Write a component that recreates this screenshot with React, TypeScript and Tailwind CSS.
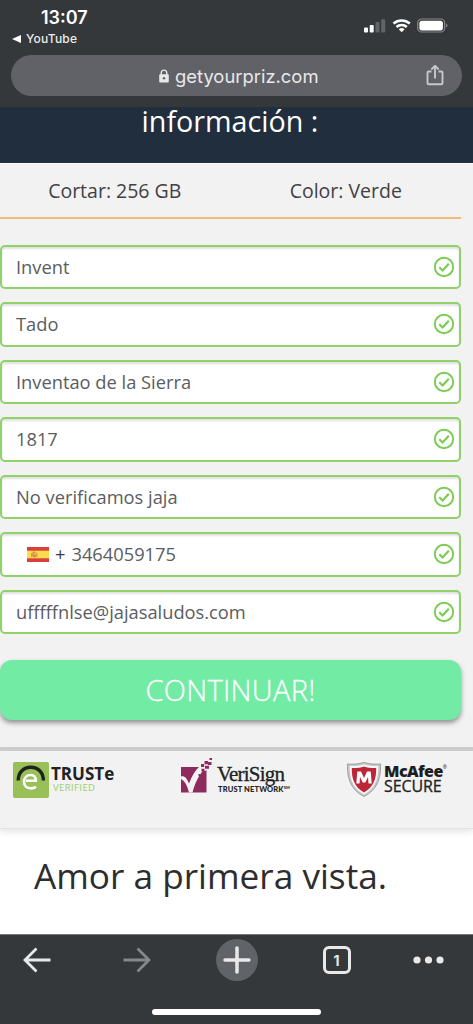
import type { ReactNode } from "react";

type Field = {
  id: string;
  value: string;
  phone?: boolean;
};

const fields: Field[] = [
  { id: "name", value: "Invent" },
  { id: "surname", value: "Tado" },
  { id: "address", value: "Inventao de la Sierra" },
  { id: "zip", value: "1817" },
  { id: "city", value: "No verificamos jaja" },
  { id: "phone", value: "3464059175", phone: true },
  { id: "email", value: "ufffffnlse@jajasaludos.com" },
];

const StatusIcons = () => (
  <svg className="h-[18px] w-[86px]" viewBox="0 0 86 18" fill="none">
    <rect x="1" y="11.5" width="4" height="5" rx="1" fill="#fff" />
    <rect x="6.7" y="9" width="4" height="7.5" rx="1" fill="#fff" />
    <rect x="12.5" y="6" width="4" height="10.5" rx="1" fill="#626568" />
    <rect x="18.2" y="3.2" width="4" height="13.3" rx="1" fill="#626568" />
    <path d="M30.500 7.600a12.200 12.200 0 0 1 16.300 0" stroke="#fff" strokeWidth="2.700" />
    <path d="M33.500 11a7.600 7.600 0 0 1 10.300 0" stroke="#fff" strokeWidth="2.500" />
    <path d="M38.700 16.300l-2.900-3a4.200 4.200 0 0 1 5.800 0z" fill="#fff" />
    <rect x="54.700" y="3" width="27" height="13" rx="4" stroke="#85888a" strokeWidth="1.200" />
    <rect x="56.400" y="4.700" width="23.500" height="9.700" rx="2.500" fill="#fff" />
    <path d="M83.200 7.500c1.800.7 1.800 3.400 0 4.100z" fill="#85888a" />
  </svg>
);

const LockIcon = () => (
  <svg className="h-[14px] w-[10px]" viewBox="0 0 10 14" fill="none">
    <path d="M2.200 6V3.900a2.800 2.800 0 0 1 5.600 0V6" stroke="#e8e8e9" strokeWidth="1.400" />
    <rect x="0.200" y="5.200" width="9.600" height="8.200" rx="1" fill="#e8e8e9" />
    <circle cx="5" cy="9.300" r="1.200" fill="#606267" />
  </svg>
);

const ShareIcon = () => (
  <svg className="h-[22px] w-[18px]" viewBox="0 0 18 22" fill="none" stroke="#c6c7c9" strokeWidth="1.900">
    <path d="M5.500 6.500H2.500a1 1 0 0 0-1 1v10.700a1 1 0 0 0 1 1h13a1 1 0 0 0 1-1V7.500a1 1 0 0 0-1-1h-3" />
    <path d="M9 13.500V1M5.300 4.500 9 .8l3.700 3.700" />
  </svg>
);

const CheckIcon = () => (
  <svg className="h-[22px] w-[22px] flex-shrink-0" viewBox="0 0 22 22" fill="none" stroke="#7acb51">
    <circle cx="11" cy="11" r="9.200" strokeWidth="1.900" />
    <path d="M6.300 11.300l3.300 3.200 6.200-6.700" strokeWidth="2.200" />
  </svg>
);

const SpainFlag = () => (
  <svg className="h-[15px] w-[22px]" viewBox="0 0 22 15">
    <rect width="22" height="15" fill="#d9403a" />
    <rect y="3.700" width="22" height="7.600" fill="#fbdc4b" />
    <path d="M5.300 5.600h4v3a2 2 0 0 1-4 0z" fill="#dc8648" />
    <path d="M6.200 4.600h2v1h-2zM4.300 6h.8v4h-.8zM9.500 6h.8v4h-.8z" fill="#cf7a52" />
    <path d="M7.200 6.300h1.500v1.500H7.200z" fill="#f6d9b5" />
  </svg>
);

const TrusteLogo = () => (
  <div className="flex w-[168px] pl-[13px] pt-[11px]">
    <svg className="h-9 w-9" viewBox="0 0 36 36" fill="none">
      <rect width="36" height="36" rx="2" fill="#98bf58" />
      <path d="M5.200 18.500C5.200 10 10.800 5.300 17.800 5.300S30.400 10 30.400 18.500" stroke="#1d241b" strokeWidth="3.400" />
      <path d="M13 18.800h9.800c0-4-2.100-5.800-5-5.800-3.800 0-6.800 2.700-6.800 6.800 0 4 2.800 6.600 6.900 6.600 2 0 3.900-.7 5-1.800" stroke="#fff" strokeWidth="2.600" />
    </svg>
    <div className="flex flex-col pl-[2px] pt-[2px]">
      <span className="font-['Open_Sans'] text-[17px] font-bold leading-[20px] text-[#222]">
        TRUSTe
      </span>
      <span className="pl-[2px] font-['Open_Sans'] text-[9.500px] leading-[8px] tracking-[0.400px] text-[#9fcf68]">
        VERIFIED
      </span>
    </div>
  </div>
);

const VerisignLogo = () => (
  <div className="flex w-[167px] pl-[13px] pt-[6px]">
    <svg className="h-[37px] w-[33px]" viewBox="0 0 33 37">
      <rect y="10" width="25.500" height="25.500" fill="#8f2a5f" />
      <path d="M0 19.500c3.500-1 5.500 1.500 8 7C11 18.500 14.500 13 18.500 9.500l4 3.500C17.500 19 14 26 11.500 35.500H8C6.500 29 4 24 0 22z" fill="#f2f2f2" />
      <path d="M17.500 10l4-3 5 2v4l-3 1z" fill="#f2f2f2" />
      <path d="M20 7h3.200v3H20zM23.500 4h3.500v3.200h-3.500zM24 8.800h4v3h-4zM28.500 1h2.500v2h-2.500zM27 5h3.500v3H27zM17.500 17h2.300v2.300h-2.300zM20.500 11.800h3v2.800h-3z" fill="#8f2a5f" />
    </svg>
    <div className="flex flex-col pl-[3px] pt-[6px]">
      <span className="font-['Liberation_Serif'] text-[21px] leading-[22px] tracking-[-0.800px] text-[#222] [-webkit-text-stroke:0.300px_#222]">
        VeriSign
      </span>
      <span className="flex pl-px font-['Lato'] text-[7.500px] font-black leading-[9px] tracking-[0.150px] text-[#222]">
        TRUST NETWORK<span className="text-[4px] leading-[5px]">SM</span>
      </span>
    </div>
  </div>
);

const McafeeLogo = () => (
  <div className="flex pl-[12px] pt-[11px]">
    <svg className="h-[35px] w-[34px]" viewBox="0 0 34 35">
      <path d="M.5 2C6 2.500 12 2 17 .5 22 2 28 2.500 33.500 2c.5 14-3 25.500-16.500 32.500C3.500 27.500 0 16 .5 2z" fill="#c9c9c9" stroke="#8e8e8e" strokeWidth=".8" />
      <path d="M2.800 4C8 4.300 13 3.700 17 2.500c4 1.200 9 1.800 14.200 1.500.3 12.500-3 22.500-14.200 28.500C5.800 26.500 2.500 16.500 2.800 4z" fill="#f7f7f7" />
      <path d="M4.800 6c4.500.2 8.700-.3 12.200-1.500 3.500 1.200 7.700 1.700 12.200 1.500.2 11-2.700 19-12.200 24.500C7.500 25 4.600 17 4.800 6z" fill="#bd2637" />
      <path d="M9.300 21.500l1-12h3.700l3 6.500 3-6.500h3.700l1 12h-3.200l-.5-6.500-2.700 5.500h-2.600L13 15l-.5 6.500z" fill="#fff" />
    </svg>
    <div className="flex flex-col pl-[3px] pt-px">
      <span className="flex font-['Open_Sans'] text-[16px] font-extrabold leading-[16px] tracking-[-0.550px] text-[#1d1d1d]">
        McAfee<span className="text-[5px] font-normal leading-[8px]">®</span>
      </span>
      <span className="font-['Open_Sans'] text-[16px] leading-[15px] tracking-[-0.100px] text-[#222] [-webkit-text-stroke:0.300px_#222]">
        SECURE
      </span>
    </div>
  </div>
);

const ToolbarItem = ({ className, children }: { className: string; children: ReactNode }) => (
  <div className={`flex h-[50px] items-center justify-center ${className}`}>{children}</div>
);

const BrowserHeader = () => (
  <header className="h-[107px] bg-[#35383b] font-['Inter'] text-white">
    <div className="flex h-[55px] justify-between">
      <div className="pl-[12px] pt-[7px]">
        <div className="pl-[29px] text-[18px] font-semibold leading-[22px]">13:07</div>
        <div className="flex items-center gap-[5px] pt-[2px] text-[12px] font-medium leading-[16px] tracking-[0.200px] text-[#ececec]">
          <svg className="h-2 w-[9px]" viewBox="0 0 9 8" fill="#fff">
            <path d="M0 4 9 0v8z" />
          </svg>
          YouTube
        </div>
      </div>
      <div className="pr-[24px] pt-[16px]">
        <StatusIcons />
      </div>
    </div>
    <div className="mx-[11px] flex h-[41px] items-center rounded-full bg-[#606267] pl-[148px] pr-[18px]">
      <LockIcon />
      <span className="flex-1 pl-[6px] text-[18.400px] leading-[22px] text-[#e8e8e9]">getyourpriz.com</span>
      <ShareIcon />
    </div>
  </header>
);

const App = () => {
  return (
    <div className="h-[1024px] w-[473px] overflow-hidden bg-white font-['Open_Sans',sans-serif]">
      <BrowserHeader />

      <div className="h-[56px] bg-[#212e3e] text-center text-white">
        <h1 className="pr-[13px] text-[28.700px] leading-[28px]">información :</h1>
      </div>

      <main className="h-[584px] border-t border-white bg-[#f2f2f2] pr-[12px]">
        <div className="flex h-[55px] border-b-2 border-[#edbd78] text-[19.500px] leading-[54px] text-[#414145]">
          <span className="w-1/2 pr-[1px] text-center">Cortar: 256 GB</span>
          <span className="w-1/2 text-center">Color: Verde</span>
        </div>

        <div className="flex flex-col gap-[13px] pt-[25.500px]">
          {fields.map((field) => (
            <div
              key={field.id}
              className="flex h-[44.500px] items-center justify-between rounded-[5px] border-2 border-[#8ed268] bg-white pl-[14px] pr-[4px] shadow-[inset_0_2px_2px_rgba(0,0,0,0.12)]"
            >
              {field.phone ? (
                <span className="flex items-center pl-[11px] text-[18.300px] leading-[26px] text-[#5b5c5f]">
                  <SpainFlag />
                  <span className="pl-[6px] pr-[6px] text-[#3b3b3e]">+</span>
                  {field.value}
                </span>
              ) : (
                <span className="text-[18.300px] leading-[26px] text-[#5b5c5f]">{field.value}</span>
              )}
              <CheckIcon />
            </div>
          ))}
        </div>

        <button className="mt-[26px] h-[60px] w-full rounded-[12px] bg-[#72eba4] text-[29px] font-light leading-[60px] tracking-[0.300px] text-white shadow-[0_3px_5px_rgba(0,0,0,0.4)] [-webkit-text-stroke:0.300px_#fff]">
          CONTINUAR!
        </button>
      </main>

      <div className="flex h-[82px] border-b border-[#e2e2e2] border-t-4 border-t-[#cccccc] bg-[#f2f2f2] shadow-[0_3px_6px_rgba(0,0,0,0.1)]">
        <TrusteLogo />
        <VerisignLogo />
        <McafeeLogo />
      </div>

      <div className="h-[105px] pl-[34px] pt-[21px] text-[35.200px] leading-[51px] text-[#2d2d2f]">
        Amor a primera vista.
      </div>

      <footer className="h-[90px] border-t border-[#777] bg-[#35383b]">
        <div className="flex">
          <ToolbarItem className="w-[73px]">
            <svg className="h-7 w-7" viewBox="0 0 28 28" fill="none" stroke="#e9e9ea" strokeWidth="2.800">
              <path d="M27.500 14H2M13.500 2.500 2 14l11.500 11.500" />
            </svg>
          </ToolbarItem>
          <ToolbarItem className="w-[127px]">
            <svg className="h-7 w-7" viewBox="0 0 28 28" fill="none" stroke="#858789" strokeWidth="2.800">
              <path d="M.5 14H26M14.500 2.500 26 14 14.500 25.500" />
            </svg>
          </ToolbarItem>
          <ToolbarItem className="w-[73px]">
            <div className="flex h-[42px] w-[42px] items-center justify-center rounded-full bg-[#606367]">
              <svg className="h-7 w-7" viewBox="0 0 28 28" stroke="#e9e9ea" strokeWidth="3.500" strokeLinecap="round">
                <path d="M14 2v24M2 14h24" />
              </svg>
            </div>
          </ToolbarItem>
          <ToolbarItem className="w-[127px]">
            <div className="flex h-7 w-7 items-center justify-center rounded-[6px] border-[3px] border-[#e9e9ea] font-['Inter'] text-[14px] font-bold text-[#e9e9ea]">
              1
            </div>
          </ToolbarItem>
          <ToolbarItem className="w-[57px]">
            <svg className="h-2 w-[31px]" viewBox="0 0 31 8" fill="#e9e9ea">
              <circle cx="4" cy="4" r="3.600" />
              <circle cx="15.500" cy="4" r="3.600" />
              <circle cx="27" cy="4" r="3.600" />
            </svg>
          </ToolbarItem>
        </div>
        <div className="mx-auto mt-[24px] h-[6px] w-[169px] rounded-full bg-white" />
      </footer>
    </div>
  );
};

export default App;
